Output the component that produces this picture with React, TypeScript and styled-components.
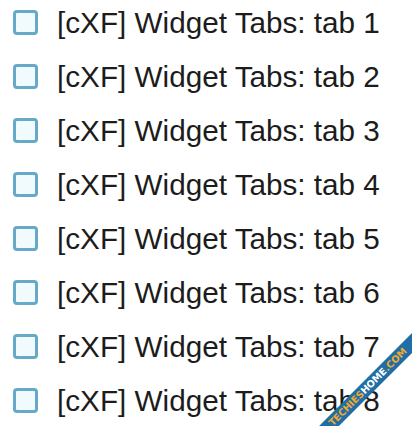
import React from "react";
import styled, { createGlobalStyle } from "styled-components";

const Global = createGlobalStyle`
  html, body {
    margin: 0;
    padding: 0;
    background: #ffffff;
    overflow: hidden;
  }
  body {
    font-family: "Liberation Sans", Arial, sans-serif;
  }
`;

const Page = styled.div`
  position: relative;
  width: 412px;
  height: 426px;
  overflow: hidden;
  background: #ffffff;
`;

const List = styled.ul`
  list-style: none;
  margin: 0;
  padding: 10px 0 0 13px;
  display: flex;
  flex-direction: column;
`;

const Row = styled.li`
  display: flex;
  height: 54px;
  align-items: flex-start;
  gap: 19px;
`;

const Box = styled.span`
  box-sizing: border-box;
  flex: none;
  width: 25px;
  height: 25px;
  border: 3px solid #67a9c8;
  border-radius: 4px;
  background: #f1fafd;
`;

const Label = styled.span`
  font-family: "Liberation Sans", Arial, sans-serif;
  font-size: 29.7px;
  line-height: 30px;
  margin-top: -2px;
  color: #1c1c1c;
  white-space: nowrap;
`;

const Ribbon = styled.div`
  position: absolute;
  left: 238px;
  top: 380px;
  width: 260px;
  height: 14px;
  background: #1f6ea6;
  transform: rotate(-45deg);
  display: flex;
  align-items: center;
  justify-content: center;
  font-family: "DejaVu Sans", "Liberation Sans", sans-serif;
  font-weight: 800;
  font-size: 9.6px;
  line-height: 1;
`;

const Part = styled.span<{ $c: string }>`
  color: ${(p) => p.$c};
`;

const tabs = [1, 2, 3, 4, 5, 6, 7, 8];

export default function App() {
  return (
    <>
      <Global />
      <Page>
        <List>
          {tabs.map((n) => (
            <Row key={n}>
              <Box />
              <Label>[cXF] Widget Tabs: tab {n}</Label>
            </Row>
          ))}
        </List>
        <Ribbon>
          <Part $c="#f4a92c">TECHIES</Part>
          <Part $c="#ffffff">HOME</Part>
          <Part $c="#f4a92c">.COM</Part>
        </Ribbon>
      </Page>
    </>
  );
}
